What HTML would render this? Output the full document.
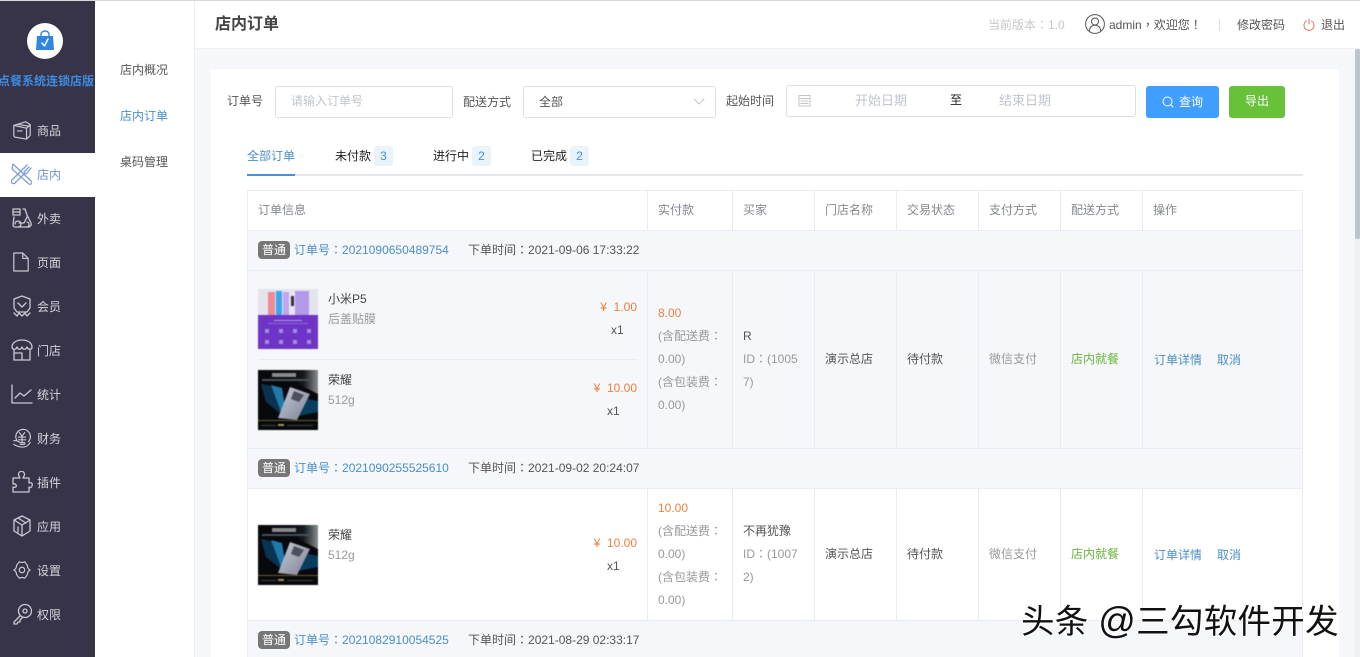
<!DOCTYPE html>
<html lang="zh-CN"><head><meta charset="utf-8"><title>店内订单</title>
<style>
html,body{margin:0;padding:0;width:1360px;height:657px;overflow:hidden;background:#f5f7fa}
body{position:relative;font:12px/20px "Liberation Sans","Noto Sans CJK SC",sans-serif;color:#606266}
.b,.t,svg.i{position:absolute}
.t{white-space:nowrap;height:20px;line-height:20px;margin-top:1px}
.c{font-family:"Noto Sans CJK TC",sans-serif}
.n{color:#d5d5dc}.g{color:#999}.d{color:#555}.l{color:#4a8fc9}.o{color:#ee7f3e}.gr{color:#67b53a}.h{color:#85888f}
.tag{position:absolute;left:258px;width:32px;height:18px;background:#777;color:#fff;border-radius:4px;text-align:center;line-height:18px}
.badge{position:absolute;top:146px;width:19px;height:20px;background:#e8f3fc;color:#4a90c8;border-radius:3px;text-align:center;line-height:20px}
svg.i{fill:none;stroke:#c9c9d2;stroke-width:1.3;stroke-linecap:round;stroke-linejoin:round}
svg.p{filter:blur(.4px)}
.v{position:absolute;width:1px;background:#e8ebf0}
</style></head><body>
<svg width="0" height="0" style="position:absolute">
<defs>
<linearGradient id="sky" x1="0" y1="0" x2="1" y2="0"><stop offset="0" stop-color="#07090d"/><stop offset=".55" stop-color="#15181c"/><stop offset="1" stop-color="#8a8e90"/></linearGradient>
<linearGradient id="ph" x1="0" y1="0" x2="1" y2="1"><stop offset="0" stop-color="#c8ccd8"/><stop offset="1" stop-color="#7d8296"/></linearGradient>
<symbol id="hon" viewBox="0 0 60 60">
<rect width="60" height="60" fill="#07090d"/>
<polygon points="28,0 60,0 60,24 44,16" fill="url(#sky)"/>
<rect x="14" y="3" width="24" height="4" fill="#8a8a8a"/><rect x="4" y="9" width="50" height="2" fill="#46515a"/>
<polygon points="3,14 22,18 28,48 8,32" fill="#0a3350"/>
<polygon points="13,15 24,18 28,42 23,42" fill="#1f79ab"/>
<polygon points="44,28 60,31 60,42 40,46" fill="#083d5e"/>
<polygon points="32,17 52,24 39,50 20,48" fill="url(#ph)"/>
<polygon points="36,21 46,25 41,32 33,29" fill="#4c505e"/>
<rect x="0" y="50" width="60" height="1" fill="#6a5a2a"/><rect x="20" y="54" width="6" height="2" fill="#a89446"/><rect x="3" y="55" width="15" height="1" fill="#444"/><rect x="29" y="55" width="26" height="1" fill="#444"/>
</symbol>
<symbol id="mi" viewBox="0 0 60 60">
<rect width="60" height="60" fill="#e4e4ec"/>
<rect x="10" y="3" width="7" height="30" fill="#ee8a96"/><rect x="18" y="2" width="6" height="31" fill="#38a8e8"/><rect x="25" y="3" width="6" height="30" fill="#c3a4ee"/><rect x="32" y="3" width="5" height="30" fill="#e8e4f4"/><rect x="33" y="7" width="3" height="10" fill="#333"/><rect x="37" y="2" width="14" height="31" fill="#b29ae8"/>
<rect y="26" width="60" height="34" fill="#6d34c6"/>
<rect x="16" y="31" width="28" height="1" fill="#b49ae8"/><rect x="10" y="34" width="40" height="1" fill="#8e68d8"/>
<g fill="#a48ce0"><rect x="7" y="40" width="4" height="4"/><rect x="21" y="40" width="4" height="4"/><rect x="35" y="40" width="4" height="4"/><rect x="49" y="40" width="4" height="4"/><rect x="7" y="51" width="4" height="4"/><rect x="21" y="51" width="4" height="4"/><rect x="35" y="51" width="4" height="4"/><rect x="49" y="51" width="4" height="4"/></g>
</symbol>
</defs></svg>

<div class="b" style="left:0;top:0;width:1360px;height:1px;background:#d9d9d9;z-index:5"></div>
<!-- sidebar -->
<div class="b" style="left:0;top:0;width:95px;height:657px;background:#37344a"></div>
<div class="b" style="left:0;top:153px;width:95px;height:44px;background:#fff"></div>
<div class="b" style="left:95px;top:0;width:100px;height:657px;background:#fff;border-right:1px solid #eceef3;box-sizing:border-box"></div>
<div class="b" style="left:27px;top:23px;width:36px;height:36px;border-radius:50%;background:#fff"></div>
<svg class="i" style="left:35px;top:30px;stroke:none" width="20" height="21" viewBox="0 0 20 21"><path d="M2 6h16l1 14H1z" fill="#2f86e0"/><path d="M6 7V4a4 3 0 0 1 8 0v3" fill="none" stroke="#2f86e0" stroke-width="1.4"/><path d="M7 13l2.500 3L13 9" fill="none" stroke="#fff" stroke-width="1.5"/></svg>
<div class="t" style="left:-2px;top:70px;color:#3f8be0;font-weight:700">点餐系统连锁店版</div>

<svg class="i" style="left:12px;top:120px" width="20" height="20" viewBox="0 0 22 22"><path d="M2 6l13-4 5 3v12l-4 4-12-2a2 2 0 0 1-2-2zM2 6l14 3 4-4M16 9v12M6 4.800l13 2M6 12h5"/></svg>
<svg class="i" style="left:10px;top:163px;stroke:#7f9fd6" width="22" height="22" viewBox="0 0 22 22"><path d="M3 1L21 18a1.500 1.500 0 0 1-2 3L2 6zM15 10L5 20a1.500 1.500 0 0 1-3-3L12 7l5-5M14 9l5-5M16 11l5-6"/></svg>
<svg class="i" style="left:11px;top:207px" width="22" height="22" viewBox="0 0 22 22"><path d="M2 2h7v6H2zM2 5h7M3 10l-1 8a2 2 0 0 0 2 2h14a3 3 0 0 0 2-4L16 8l-2-6h-2M7 20a3 3 0 1 0-3-3M15 20a2.500 2.500 0 1 0 1-5M8 16h5l3-6"/></svg>
<svg class="i" style="left:12px;top:252px" width="18" height="20" viewBox="0 0 20 22"><path d="M2 1h10l6 6v14H2zM12 1v6h6"/></svg>
<svg class="i" style="left:12px;top:295px" width="20" height="22" viewBox="0 0 20 22"><path d="M10 1l8 3v9l-3 4H5l-3-4V4zM6 8l4 4 4-4M2 18l3 3 2-3 3 3 3-3 2 3 3-3"/></svg>
<svg class="i" style="left:11px;top:339px" width="22" height="22" viewBox="0 0 22 22"><path d="M3 10v11h16V10M1 8c0-4 4-7 10-7s10 3 10 7c0 3-4 3-5 0-1 3-4 3-5 0-1 3-4 3-5 0-1 3-5 3-5 0zM11 14H4M11 14v7"/></svg>
<svg class="i" style="left:11px;top:383px" width="22" height="22" viewBox="0 0 22 22"><path d="M1 2v18h20M4 15l5-5 4 3 7-6"/></svg>
<svg class="i" style="left:12px;top:427px" width="20" height="22" viewBox="0 0 22 22"><path d="M5 13a8 8 0 1 1 13 2M8 5l3 4 3-4M7 10h8M7 13h8M11 9v7M2 14c3-1 5 1 7 2h4c2 0 1 2 0 2H9M2 18c3 2 6 3 10 3s6-2 8-5"/></svg>
<svg class="i" style="left:11px;top:471px" width="22" height="22" viewBox="0 0 22 22"><path d="M8 5a3 3 0 1 1 5 0l-1 2h6v5c2-1 4 0 3 3-1 2-2 2-3 1v5H2v-5c3 1 4-1 3-2-1-2-2-1-3-1V7h7z"/></svg>
<svg class="i" style="left:12px;top:515px" width="20" height="22" viewBox="0 0 20 22"><path d="M10 1l8 4v11l-8 5-8-5V5zM2 5l8 5 8-5M10 10v11M6 3l8 5M6 12v5"/></svg>
<svg class="i" style="left:12px;top:560px" width="20" height="20" viewBox="0 0 20 22"><path d="M7 2c2 1 4 1 6 0l3 4c0 2 1 4 3 5-2 1-3 3-3 5l-3 4c-2-1-4-1-6 0l-3-4c0-2-1-4-3-5 2-1 3-3 3-5z"/><circle cx="10" cy="11" r="3"/></svg>
<svg class="i" style="left:12px;top:603px" width="20" height="22" viewBox="0 0 20 22"><circle cx="13" cy="8" r="6.500"/><circle cx="13" cy="8" r="2"/><path d="M8 13l-6 6v2h3l1-2h2v-2l2-2"/></svg>

<div class="t n" style="left:37px;top:120px">商品</div>
<div class="t" style="left:37px;top:164px;color:#6f93c8">店内</div>
<div class="t n" style="left:37px;top:208px">外卖</div>
<div class="t n" style="left:37px;top:252px">页面</div>
<div class="t n" style="left:37px;top:296px">会员</div>
<div class="t n" style="left:37px;top:340px">门店</div>
<div class="t n" style="left:37px;top:384px">统计</div>
<div class="t n" style="left:37px;top:428px">财务</div>
<div class="t n" style="left:37px;top:472px">插件</div>
<div class="t n" style="left:37px;top:516px">应用</div>
<div class="t n" style="left:37px;top:560px">设置</div>
<div class="t n" style="left:37px;top:604px">权限</div>

<div class="t d" style="left:120px;top:59px">店内概况</div>
<div class="t l" style="left:120px;top:105px">店内订单</div>
<div class="t d" style="left:120px;top:151px">桌码管理</div>

<!-- header -->
<div class="b" style="left:195px;top:0;width:1165px;height:49px;background:#fff;border-bottom:1px solid #eef0f4;box-sizing:border-box"></div>
<div class="t" style="left:215px;top:14px;font-size:16px;font-weight:700;color:#444">店内订单</div>
<div class="t" style="left:988px;top:14px;color:#c8c8c8">当前版本<span class="c" lang="zh-TW">：</span>1.0</div>
<svg class="i" style="left:1085px;top:14px;stroke:#555;stroke-width:1" width="20" height="20" viewBox="0 0 20 20"><circle cx="10" cy="10" r="9.400"/><circle cx="10" cy="7.500" r="3.500"/><path d="M4.500 16.500c0-7 11-7 11 0"/></svg>
<div class="t d" style="left:1109px;top:14px">admin<span class="c" lang="zh-TW">，</span>欢迎您<span class="c" lang="zh-TW">！</span></div>
<div class="b" style="left:1219px;top:19px;width:1px;height:12px;background:#ddd"></div>
<div class="t d" style="left:1237px;top:14px">修改密码</div>
<svg class="i" style="left:1303px;top:18px;stroke:#e2706a;stroke-width:1" width="12" height="13" viewBox="0 0 12 13"><path d="M6 1v5M3.500 3a5 5 0 1 0 5 0"/></svg>
<div class="t d" style="left:1321px;top:14px">退出</div>

<!-- scrollbar -->
<div class="b" style="left:1355px;top:49px;width:5px;height:608px;background:#eef1f4"></div>
<div class="b" style="left:1355px;top:49px;width:5px;height:190px;background:#bcc4cc;border-radius:2px"></div>

<!-- card -->
<div class="b" style="left:211px;top:69px;width:1128px;height:588px;background:#fff"></div>
<div class="t d" style="left:227px;top:90px">订单号</div>
<div class="b" style="left:275px;top:86px;width:178px;height:32px;border:1px solid #dcdfe6;border-radius:3px;box-sizing:border-box"></div>
<div class="t" style="left:291px;top:90px;color:#c0c4cc">请输入订单号</div>
<div class="t d" style="left:463px;top:91px">配送方式</div>
<div class="b" style="left:523px;top:86px;width:193px;height:32px;border:1px solid #dcdfe6;border-radius:3px;box-sizing:border-box"></div>
<div class="t d" style="left:539px;top:91px">全部</div>
<svg class="i" style="left:693px;top:98px;stroke:#c0c4cc;stroke-width:1" width="12" height="8" viewBox="0 0 12 8"><path d="M1 1l5 5 5-5"/></svg>
<div class="t d" style="left:726px;top:90px">起始时间</div>
<div class="b" style="left:786px;top:85px;width:350px;height:32px;border:1px solid #dcdfe6;border-radius:3px;box-sizing:border-box"></div>
<svg class="i" style="left:798px;top:94px;stroke:#c0c4cc;stroke-width:1" width="13" height="13" viewBox="0 0 13 13"><path d="M1 1.500h11v10.500H1zM1 4.500h11M3 7h7M3 9.500h7"/></svg>
<div class="t" style="left:855px;top:90px;font-size:13px;color:#c0c4cc">开始日期</div>
<div class="t" style="left:950px;top:89px;color:#222">至</div>
<div class="t" style="left:999px;top:90px;font-size:13px;color:#c0c4cc">结束日期</div>
<div class="b" style="left:1146px;top:86px;width:73px;height:32px;background:#409eff;border-radius:3px"></div>
<svg class="i" style="left:1162px;top:96px;stroke:#fff;stroke-width:1" width="12" height="12" viewBox="0 0 12 12"><circle cx="5.500" cy="5.500" r="4.500"/><path d="M9 9l2 2"/></svg>
<div class="t" style="left:1179px;top:91px;color:#fff">查询</div>
<div class="b" style="left:1229px;top:86px;width:56px;height:32px;background:#67c23a;border-radius:3px"></div>
<div class="t" style="left:1245px;top:90px;color:#fff">导出</div>

<!-- tabs -->
<div class="b" style="left:247px;top:174px;width:1056px;height:2px;background:#e4e7ed"></div>
<div class="b" style="left:247px;top:174px;width:48px;height:2px;background:#4a90d9"></div>
<div class="t l" style="left:247px;top:145px">全部订单</div>
<div class="t" style="left:335px;top:145px;color:#222">未付款</div><div class="badge" style="left:374px">3</div>
<div class="t" style="left:433px;top:145px;color:#222">进行中</div><div class="badge" style="left:472px">2</div>
<div class="t" style="left:531px;top:145px;color:#222">已完成</div><div class="badge" style="left:570px">2</div>

<!-- table -->
<div class="b" style="left:247px;top:190px;width:1056px;height:467px;box-sizing:border-box;border:1px solid #e9ecf0;border-bottom:0"></div>
<div class="b" style="left:248px;top:230px;width:1054px;height:218px;background:#f5f7fa;border-top:1px solid #e9ecf0;box-sizing:border-box"></div>
<div class="b" style="left:248px;top:270px;width:1054px;height:1px;background:#e9ecf0"></div>
<div class="b" style="left:248px;top:448px;width:1054px;height:41px;background:#f5f7fa;border-top:1px solid #e9ecf0;border-bottom:1px solid #e9ecf0;box-sizing:border-box"></div>
<div class="b" style="left:248px;top:620px;width:1054px;height:37px;background:#f5f7fa;border-top:1px solid #e9ecf0;box-sizing:border-box"></div>

<div class="v" style="left:647px;top:190px;height:40px"></div><div class="v" style="left:732px;top:190px;height:40px"></div><div class="v" style="left:814px;top:190px;height:40px"></div><div class="v" style="left:896px;top:190px;height:40px"></div><div class="v" style="left:978px;top:190px;height:40px"></div><div class="v" style="left:1060px;top:190px;height:40px"></div><div class="v" style="left:1142px;top:190px;height:40px"></div>
<div class="v" style="left:647px;top:271px;height:177px"></div><div class="v" style="left:732px;top:271px;height:177px"></div><div class="v" style="left:814px;top:271px;height:177px"></div><div class="v" style="left:896px;top:271px;height:177px"></div><div class="v" style="left:978px;top:271px;height:177px"></div><div class="v" style="left:1060px;top:271px;height:177px"></div><div class="v" style="left:1142px;top:271px;height:177px"></div>
<div class="v" style="left:647px;top:489px;height:131px"></div><div class="v" style="left:732px;top:489px;height:131px"></div><div class="v" style="left:814px;top:489px;height:131px"></div><div class="v" style="left:896px;top:489px;height:131px"></div><div class="v" style="left:978px;top:489px;height:131px"></div><div class="v" style="left:1060px;top:489px;height:131px"></div><div class="v" style="left:1142px;top:489px;height:131px"></div>

<div class="t h" style="left:258px;top:199px">订单信息</div>
<div class="t h" style="left:658px;top:199px">实付款</div>
<div class="t h" style="left:743px;top:199px">买家</div>
<div class="t h" style="left:825px;top:199px">门店名称</div>
<div class="t h" style="left:907px;top:199px">交易状态</div>
<div class="t h" style="left:989px;top:199px">支付方式</div>
<div class="t h" style="left:1071px;top:199px">配送方式</div>
<div class="t h" style="left:1153px;top:199px">操作</div>

<!-- order 1 -->
<div class="tag" style="top:241px">普通</div>
<div class="t l" style="left:294px;top:239px">订单号<span class="c" lang="zh-TW">：</span>2021090650489754</div>
<div class="t d" style="left:468px;top:239px">下单时间<span class="c" lang="zh-TW">：</span>2021-09-06 17:33:22</div>
<svg class="b p" style="left:258px;top:289px" width="60" height="60"><use href="#mi"/></svg>
<div class="t" style="left:328px;top:288px;color:#444">小米P5</div>
<div class="t g" style="left:328px;top:308px">后盖贴膜</div>
<div class="t o" style="right:723px;top:296px">¥&nbsp; 1.00</div>
<div class="t d" style="left:611px;top:319px">x1</div>
<div class="b" style="left:258px;top:359px;width:379px;height:1px;background:#e9ecf0"></div>
<svg class="b p" style="left:258px;top:370px" width="60" height="60"><use href="#hon"/></svg>
<div class="t" style="left:328px;top:369px;color:#444">荣耀</div>
<div class="t g" style="left:328px;top:389px">512g</div>
<div class="t o" style="right:723px;top:377px">¥&nbsp; 10.00</div>
<div class="t d" style="left:607px;top:400px">x1</div>
<div class="t o" style="left:658px;top:302px">8.00</div>
<div class="t g" style="left:658px;top:325px">(含配送费<span class="c" lang="zh-TW">：</span></div>
<div class="t g" style="left:658px;top:348px">0.00)</div>
<div class="t g" style="left:658px;top:371px">(含包装费<span class="c" lang="zh-TW">：</span></div>
<div class="t g" style="left:658px;top:394px">0.00)</div>
<div class="t d" style="left:743px;top:325px">R</div>
<div class="t g" style="left:743px;top:348px">ID<span class="c" lang="zh-TW">：</span>(1005</div>
<div class="t g" style="left:743px;top:371px">7)</div>
<div class="t d" style="left:825px;top:348px">演示总店</div>
<div class="t d" style="left:907px;top:348px">待付款</div>
<div class="t g" style="left:989px;top:348px">微信支付</div>
<div class="t gr" style="left:1071px;top:348px">店内就餐</div>
<div class="t l" style="left:1154px;top:349px">订单详情</div>
<div class="t l" style="left:1217px;top:349px">取消</div>

<!-- order 2 -->
<div class="tag" style="top:459px">普通</div>
<div class="t l" style="left:294px;top:457px">订单号<span class="c" lang="zh-TW">：</span>2021090255525610</div>
<div class="t d" style="left:468px;top:457px">下单时间<span class="c" lang="zh-TW">：</span>2021-09-02 20:24:07</div>
<svg class="b p" style="left:258px;top:525px" width="60" height="60"><use href="#hon"/></svg>
<div class="t" style="left:328px;top:524px;color:#444">荣耀</div>
<div class="t g" style="left:328px;top:544px">512g</div>
<div class="t o" style="right:723px;top:532px">¥&nbsp; 10.00</div>
<div class="t d" style="left:607px;top:555px">x1</div>
<div class="t o" style="left:658px;top:497px">10.00</div>
<div class="t g" style="left:658px;top:520px">(含配送费<span class="c" lang="zh-TW">：</span></div>
<div class="t g" style="left:658px;top:543px">0.00)</div>
<div class="t g" style="left:658px;top:566px">(含包装费<span class="c" lang="zh-TW">：</span></div>
<div class="t g" style="left:658px;top:589px">0.00)</div>
<div class="t d" style="left:743px;top:520px">不再犹豫</div>
<div class="t g" style="left:743px;top:543px">ID<span class="c" lang="zh-TW">：</span>(1007</div>
<div class="t g" style="left:743px;top:566px">2)</div>
<div class="t d" style="left:825px;top:543px">演示总店</div>
<div class="t d" style="left:907px;top:543px">待付款</div>
<div class="t g" style="left:989px;top:543px">微信支付</div>
<div class="t gr" style="left:1071px;top:543px">店内就餐</div>
<div class="t l" style="left:1154px;top:544px">订单详情</div>
<div class="t l" style="left:1217px;top:544px">取消</div>

<!-- order 3 -->
<div class="tag" style="top:631px">普通</div>
<div class="t l" style="left:294px;top:629px">订单号<span class="c" lang="zh-TW">：</span>2021082910054525</div>
<div class="t d" style="left:468px;top:629px">下单时间<span class="c" lang="zh-TW">：</span>2021-08-29 02:33:17</div>

<!-- watermark -->
<div class="t" style="left:1021px;top:600px;height:40px;line-height:40px;font-size:33.500px;letter-spacing:.3px;color:#111;text-shadow:1px 1px 0 #fff,-1px -1px 0 #fff,1px -1px 0 #fff,-1px 1px 0 #fff">头条 <span style="font-size:37px">@</span>三勾软件开发</div>
</body></html>
